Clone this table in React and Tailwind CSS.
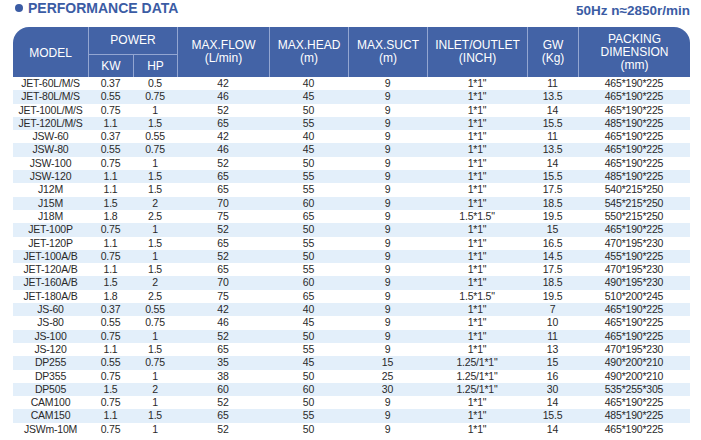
// Performance data table
const cols = "grid-cols-[75px_45px_44px_92px_79px_79px_100px_51px_112px]";

const rows = [
  ["JET-60L/M/S", "0.37", "0.5", "42", "40", "9", '1*1"', "11", "465*190*225"],
  ["JET-80L/M/S", "0.55", "0.75", "46", "45", "9", '1*1"', "13.5", "465*190*225"],
  ["JET-100L/M/S", "0.75", "1", "52", "50", "9", '1*1"', "14", "465*190*225"],
  ["JET-120L/M/S", "1.1", "1.5", "65", "55", "9", '1*1"', "15.5", "485*190*225"],
  ["JSW-60", "0.37", "0.55", "42", "40", "9", '1*1"', "11", "465*190*225"],
  ["JSW-80", "0.55", "0.75", "46", "45", "9", '1*1"', "13.5", "465*190*225"],
  ["JSW-100", "0.75", "1", "52", "50", "9", '1*1"', "14", "465*190*225"],
  ["JSW-120", "1.1", "1.5", "65", "55", "9", '1*1"', "15.5", "485*190*225"],
  ["J12M", "1.1", "1.5", "65", "55", "9", '1*1"', "17.5", "540*215*250"],
  ["J15M", "1.5", "2", "70", "60", "9", '1*1"', "18.5", "545*215*250"],
  ["J18M", "1.8", "2.5", "75", "65", "9", '1.5*1.5"', "19.5", "550*215*250"],
  ["JET-100P", "0.75", "1", "52", "50", "9", '1*1"', "15", "465*190*225"],
  ["JET-120P", "1.1", "1.5", "65", "55", "9", '1*1"', "16.5", "470*195*230"],
  ["JET-100A/B", "0.75", "1", "52", "50", "9", '1*1"', "14.5", "455*190*225"],
  ["JET-120A/B", "1.1", "1.5", "65", "55", "9", '1*1"', "17.5", "470*195*230"],
  ["JET-160A/B", "1.5", "2", "70", "60", "9", '1*1"', "18.5", "490*195*230"],
  ["JET-180A/B", "1.8", "2.5", "75", "65", "9", '1.5*1.5"', "19.5", "510*200*245"],
  ["JS-60", "0.37", "0.55", "42", "40", "9", '1*1"', "7", "465*190*225"],
  ["JS-80", "0.55", "0.75", "46", "45", "9", '1*1"', "10", "465*190*225"],
  ["JS-100", "0.75", "1", "52", "50", "9", '1*1"', "11", "465*190*225"],
  ["JS-120", "1.1", "1.5", "65", "55", "9", '1*1"', "13", "470*195*230"],
  ["DP255", "0.55", "0.75", "35", "45", "15", '1.25/1*1"', "15", "490*200*210"],
  ["DP355", "0.75", "1", "38", "50", "25", '1.25/1*1"', "16", "490*200*210"],
  ["DP505", "1.5", "2", "60", "60", "30", '1.25/1*1"', "30", "535*255*305"],
  ["CAM100", "0.75", "1", "52", "50", "9", '1*1"', "14", "465*190*225"],
  ["CAM150", "1.1", "1.5", "65", "55", "9", '1*1"', "15.5", "485*190*225"],
  ["JSWm-10M", "0.75", "1", "52", "50", "9", '1*1"', "14", "465*190*225"],
];

const HeadCell = ({ className = "", children }) => (
  <div
    className={`flex flex-col items-center justify-center text-center leading-[13px] border-l border-[#93a6d2] ${className}`}
  >
    {children}
  </div>
);

export default function App() {
  return (
    <div className="w-[701px] h-[440px] bg-white overflow-hidden pl-[13px] pr-[11px] font-['Liberation_Sans',Arial,sans-serif]">
      {/* title bar */}
      <div className="h-[27px] flex justify-between items-start text-[#3b5ca4] font-bold">
        <div className="flex items-center gap-[5px] pl-[2px] text-[14px] leading-[16px]">
          <span className="w-[8px] h-[8px] rounded-full bg-[#3b5ca4]" />
          <span>PERFORMANCE DATA</span>
        </div>
        <div className="text-[13.5px] leading-[16px] mt-[3px]">50Hz n≈2850r/min</div>
      </div>

      {/* header */}
      <div
        className={`grid ${cols} grid-rows-[28px_22px] bg-[#4363a6] text-white text-[12px] rounded-t-[16px] overflow-hidden`}
      >
        <HeadCell className="row-span-2 border-l-0 pt-[2px]">MODEL</HeadCell>
        <HeadCell className="col-span-2 border-b">POWER</HeadCell>
        <HeadCell className="row-span-2">
          <span>MAX.FLOW</span>
          <span>(L/min)</span>
        </HeadCell>
        <HeadCell className="row-span-2">
          <span>MAX.HEAD</span>
          <span>(m)</span>
        </HeadCell>
        <HeadCell className="row-span-2">
          <span>MAX.SUCT</span>
          <span>(m)</span>
        </HeadCell>
        <HeadCell className="row-span-2">
          <span>INLET/OUTLET</span>
          <span>(INCH)</span>
        </HeadCell>
        <HeadCell className="row-span-2">
          <span>GW</span>
          <span>(Kg)</span>
        </HeadCell>
        <HeadCell className="row-span-2 leading-[12.5px]">
          <span>PACKING</span>
          <span>DIMENSION</span>
          <span>(mm)</span>
        </HeadCell>
        <HeadCell>KW</HeadCell>
        <HeadCell>HP</HeadCell>
      </div>

      {/* body */}
      <div className="text-[10.5px] tracking-[-0.2px] text-[#2a2a2a]">
        {rows.map((r, i) => (
          <div
            key={r[0]}
            className={`grid ${cols} h-[13.3px] leading-[13.3px] ${
              i % 2 ? "bg-[#e3effa]" : "bg-white"
            }`}
          >
            {r.map((c, j) => (
              <div key={j} className="text-center whitespace-nowrap">
                {c}
              </div>
            ))}
          </div>
        ))}
      </div>
    </div>
  );
}
